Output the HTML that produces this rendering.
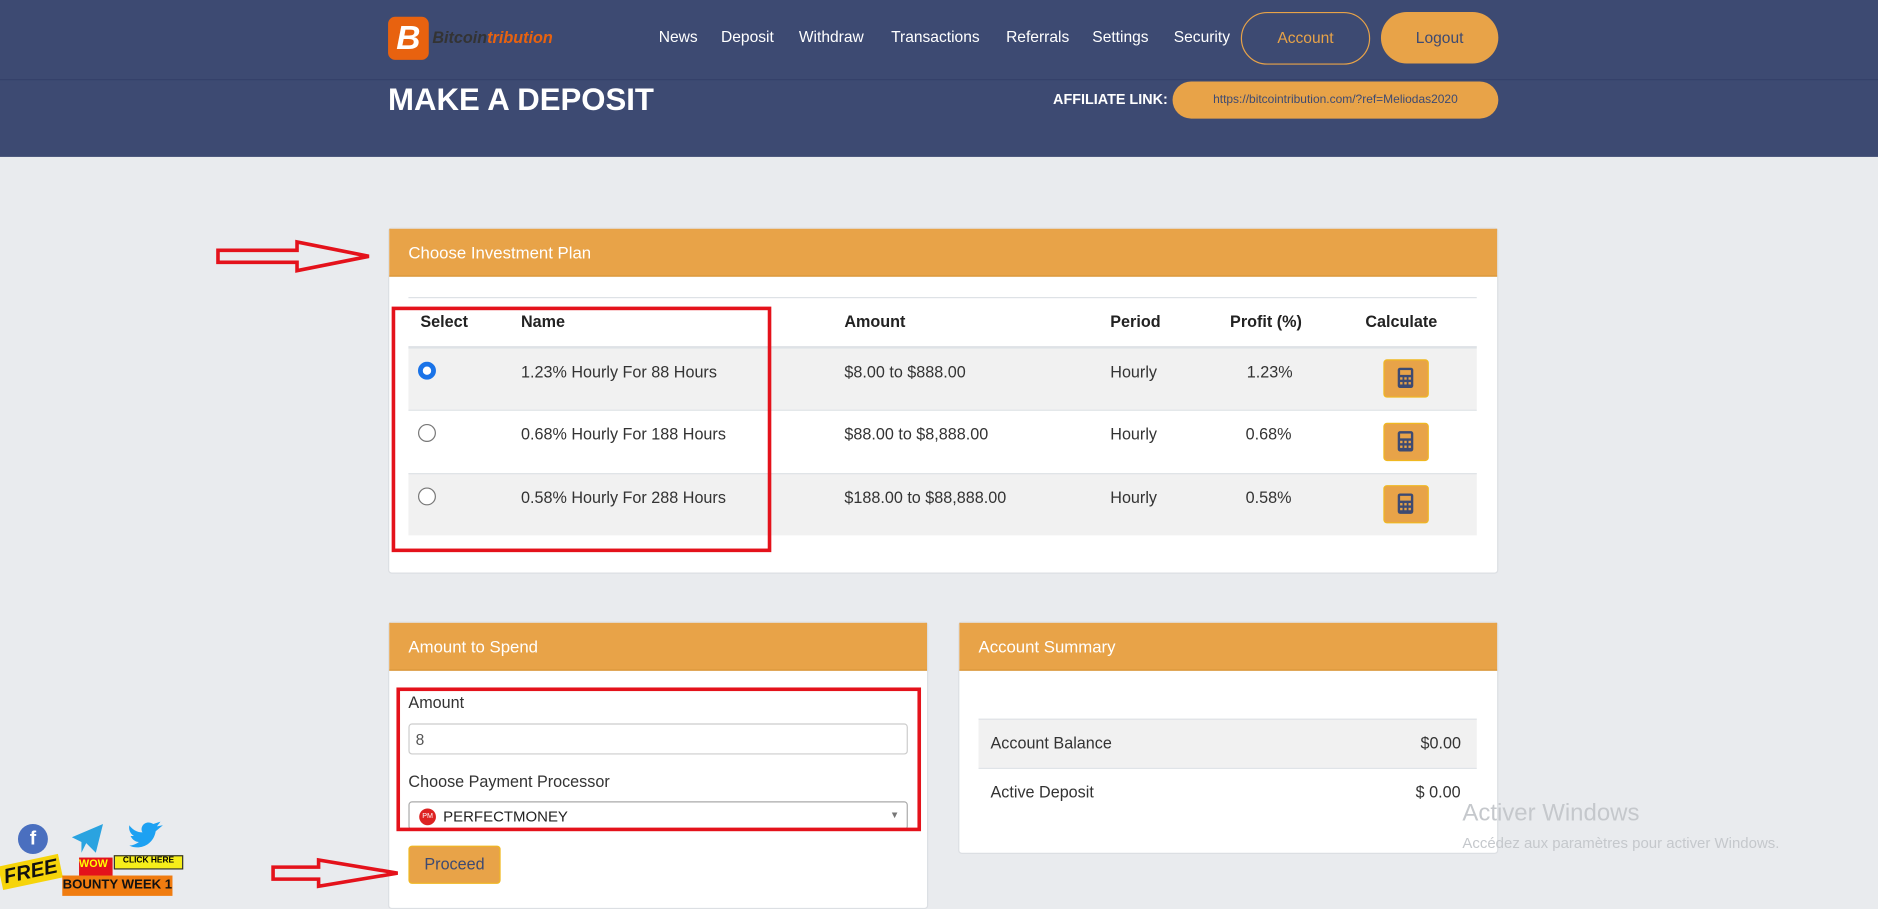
<!DOCTYPE html>
<html><head><meta charset="utf-8"><style>
*{box-sizing:border-box;margin:0;padding:0}
html,body{width:1878px;height:902px;overflow:hidden;background:#e9ebee;font-family:"Liberation Sans",sans-serif}
#w{position:absolute;left:0;top:0;width:1568px;height:753px;transform:scale(1.19770);transform-origin:0 0;background:#e9ebee}
.a{position:absolute;white-space:nowrap}
.hd{left:0;top:0;width:1568px;height:131px;background:#3d4a72}
.ln{left:0;top:66px;width:1568px;height:1px;background:#35416a}
.nav{top:23px;color:#fff;font-size:13px}
.btn{border-radius:22px;text-align:center;font-size:13px}
.panel{background:#fff;border:1px solid #dcdfe3;border-radius:3px}
.ph{position:absolute;left:0;top:0;right:0;height:40px;background:#e8a348;color:#fff;font-size:14px;padding:12px 16px;border-bottom:1px solid #d89538}
.th{top:261px;font-size:13.5px;font-weight:bold;color:#222}
.row{left:341px;width:892px;border-top:1px solid #dee2e6}
.c{font-size:13.5px;color:#333}
.radio{width:15px;height:15px;border-radius:50%;border:1px solid #777;background:#fff}
.calc{width:38px;height:32px;background:#e8a348;border:1px solid #f0b820;border-radius:3px}
</style></head><body><div id="w">
<div class="a hd"></div><div class="a ln"></div>
<div class="a" style="left:324px;top:14px;width:34px;height:36px;background:#e8620f;border-radius:6px;color:#fff;font:italic bold 28px 'Liberation Sans';text-align:center;line-height:36px">B</div>
<div class="a" style="left:361px;top:24px;font:italic bold 13.5px 'Liberation Sans';color:#333">Bitcoin<span style="color:#e8620f">tribution</span></div>
<div class="a nav" style="left:550px">News</div>
<div class="a nav" style="left:602px">Deposit</div>
<div class="a nav" style="left:667px">Withdraw</div>
<div class="a nav" style="left:744px">Transactions</div>
<div class="a nav" style="left:840px">Referrals</div>
<div class="a nav" style="left:912px">Settings</div>
<div class="a nav" style="left:980px">Security</div>
<div class="a btn" style="left:1036px;top:10px;width:108px;height:44px;border:1px solid #e8a348;color:#e8a348;line-height:42px">Account</div>
<div class="a btn" style="left:1153px;top:10px;width:98px;height:43px;background:#e8a348;color:#3d4a72;line-height:43px">Logout</div>
<div class="a" style="left:324px;top:68px;color:#fff;font-size:26px;font-weight:bold">MAKE A DEPOSIT</div>
<div class="a" style="right:593px;top:76px;color:#fff;font-size:12px;font-weight:bold">AFFILIATE LINK:</div>
<div class="a btn" style="left:979px;top:68px;width:272px;height:31px;background:#e8a348;color:#3d4a72;font-size:10px;line-height:31px">https://bitcointribution.com/?ref=Meliodas2020</div>

<svg class="a" style="left:180px;top:200px" width="132" height="30"><path d="M2 9 H68 V2 L128 14 L68 26 V19 H2 Z" fill="none" stroke="#e4121b" stroke-width="3"/></svg>
<div class="a panel" style="left:324px;top:190px;width:927px;height:289px"><div class="ph">Choose Investment Plan</div></div>
<div class="a" style="left:341px;top:248px;width:892px;height:1px;background:#dee2e6"></div>
<div class="a th" style="left:351px">Select</div><div class="a th" style="left:435px">Name</div><div class="a th" style="left:705px">Amount</div><div class="a th" style="left:927px">Period</div><div class="a th" style="left:1027px">Profit (%)</div><div class="a th" style="left:1140px">Calculate</div>
<div class="a row" style="top:289px;height:53px;background:#f1f1f1;border-top:2px solid #dee2e6"></div>
<div class="a row" style="top:342px;height:53px;background:#fff"></div>
<div class="a row" style="top:395px;height:52px;background:#f1f1f1"></div>
<div class="a radio" style="left:349px;top:302px;border:4px solid #1a73e8"></div>
<div class="a radio" style="left:349px;top:354px"></div>
<div class="a radio" style="left:349px;top:407px"></div>
<div class="a c" style="left:435px;top:303px">1.23% Hourly For 88 Hours</div><div class="a c" style="left:705px;top:303px">$8.00 to $888.00</div><div class="a c" style="left:927px;top:303px">Hourly</div><div class="a c" style="left:1041px;top:303px">1.23%</div>
<div class="a c" style="left:435px;top:355px">0.68% Hourly For 188 Hours</div><div class="a c" style="left:705px;top:355px">$88.00 to $8,888.00</div><div class="a c" style="left:927px;top:355px">Hourly</div><div class="a c" style="left:1040px;top:355px">0.68%</div>
<div class="a c" style="left:435px;top:408px">0.58% Hourly For 288 Hours</div><div class="a c" style="left:705px;top:408px">$188.00 to $88,888.00</div><div class="a c" style="left:927px;top:408px">Hourly</div><div class="a c" style="left:1040px;top:408px">0.58%</div>
<svg width="0" height="0" style="position:absolute"><defs><g id="ci"><rect x="12" y="7" width="13" height="17" rx="2" fill="#3d4a72"/><rect x="14" y="9" width="9" height="4" fill="#e8a348"/><g fill="#e8a348"><rect x="14" y="15" width="2" height="2"/><rect x="17.5" y="15" width="2" height="2"/><rect x="21" y="15" width="2" height="2"/><rect x="14" y="19" width="2" height="2"/><rect x="17.5" y="19" width="2" height="2"/><rect x="21" y="19" width="2" height="2"/></g></g></defs></svg>
<div class="a calc" style="left:1155px;top:300px"><svg width="38" height="32" style="position:absolute;left:-1px;top:-1px"><use href="#ci"/></svg></div>
<div class="a calc" style="left:1155px;top:353px"><svg width="38" height="32" style="position:absolute;left:-1px;top:-1px"><use href="#ci"/></svg></div>
<div class="a calc" style="left:1155px;top:405px"><svg width="38" height="32" style="position:absolute;left:-1px;top:-1px"><use href="#ci"/></svg></div>
<div class="a" style="left:327px;top:256px;width:317px;height:205px;border:3px solid #e4121b"></div>

<div class="a panel" style="left:324px;top:519px;width:451px;height:240px"><div class="ph">Amount to Spend</div></div>
<div class="a c" style="left:341px;top:579px">Amount</div>
<div class="a" style="left:341px;top:604px;width:417px;height:26px;border:1px solid #ccc;border-radius:3px;font-size:13px;color:#555;padding:5px 5px">8</div>
<div class="a c" style="left:341px;top:645px">Choose Payment Processor</div>
<div class="a" style="left:341px;top:669px;width:417px;height:24px;border:1px solid #aaa;border-radius:3px;font-size:12.5px;color:#222;padding:5px 0 0 28px">PERFECTMONEY</div>
<div class="a" style="left:350px;top:675px;width:14px;height:14px;border-radius:50%;background:#d22;color:#fff;font-size:6px;text-align:center;line-height:14px">PM</div>
<div class="a" style="left:743px;top:676px;font-size:8px;color:#777">▼</div>
<div class="a" style="left:331px;top:574px;width:438px;height:120px;border:3px solid #e4121b"></div>
<div class="a" style="left:341px;top:706px;width:77px;height:32px;background:#e8a348;border:1px solid #f0b820;border-radius:3px;color:#3d4a72;font-size:13.5px;text-align:center;line-height:30px">Proceed</div>
<svg class="a" style="left:226px;top:716px" width="110" height="28"><path d="M2 8 H40 V2 L106 13 L40 24 V18 H2 Z" fill="none" stroke="#e4121b" stroke-width="3"/></svg>

<div class="a panel" style="left:800px;top:519px;width:451px;height:194px"><div class="ph">Account Summary</div></div>
<div class="a" style="left:817px;top:600px;width:416px;height:41px;background:#f1f1f1;border-top:1px solid #dee2e6"></div>
<div class="a" style="left:817px;top:641px;width:416px;height:41px;border-top:1px solid #dee2e6"></div>
<div class="a c" style="left:827px;top:613px">Account Balance</div><div class="a c" style="left:1186px;top:613px">$0.00</div>
<div class="a c" style="left:827px;top:654px">Active Deposit</div><div class="a c" style="left:1182px;top:654px">$ 0.00</div>

<div class="a" style="left:1221px;top:668px;font-size:20px;color:#c5c8cc">Activer Windows</div>
<div class="a" style="left:1221px;top:697px;font-size:12.5px;color:#c5c8cc">Accédez aux paramètres pour activer Windows.</div>

<div class="a" style="left:15px;top:688px;width:25px;height:25px;border-radius:50%;background:#4a6fbf;color:#fff;font-weight:bold;text-align:center;line-height:26px">f</div>
<svg class="a" style="left:58px;top:686px" width="30" height="28"><path d="M2 13 L28 2 L22 26 L14 18 L10 26 L10 17 Z" fill="#2aa3e0"/></svg>
<svg class="a" style="left:106px;top:684px" width="32" height="30"><path d="M2 22 C10 26 22 22 24 10 L30 5 L25 6 L28 2 L22 4 C16 0 10 6 13 11 C8 11 4 8 2 5 C1 10 4 13 6 14 L3 14 C5 18 8 19 10 19 C7 21 4 22 2 22 Z" fill="#1da1f2"/></svg>
<div class="a" style="left:0;top:718px;font:italic bold 17px 'Liberation Sans';color:#111;background:#f6d40a;padding:0 3px;transform:rotate(-12deg)">FREE</div>
<div class="a" style="left:95px;top:714px;width:58px;height:12px;background:#f6ee1a;font-size:7px;font-weight:bold;text-align:center;border:1px solid #333">CLICK HERE</div>
<div class="a" style="left:66px;top:716px;width:28px;height:16px;background:#e4121b;color:#ff0;font-size:9px;font-weight:bold">WOW</div>
<div class="a" style="left:52px;top:731px;width:92px;height:17px;background:#f07c10;color:#111;font-size:11px;font-weight:bold;text-align:center;line-height:17px">BOUNTY WEEK 1</div>
</div></body></html>
